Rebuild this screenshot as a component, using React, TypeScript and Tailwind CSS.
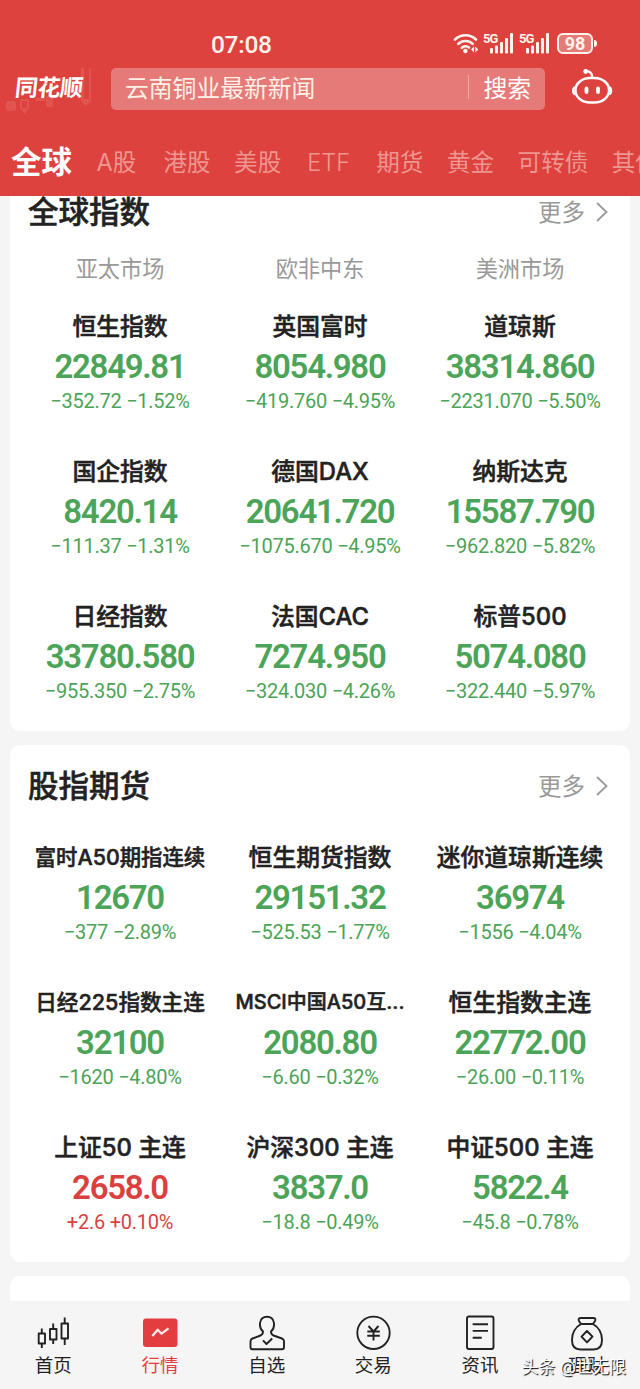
import type { ReactNode } from 'react';

type Quote = {
  name: string;
  value: string;
  change: string;
  percent: string;
  size?: string;
};

const TABS = ['港股', '美股', 'ETF', '期货', '黄金', '可转债', '其他'];

const MARKETS = ['亚太市场', '欧非中东', '美洲市场'];

const GLOBAL_QUOTES: Quote[] = [
  { name: '恒生指数', value: '22849.81', change: '−352.72', percent: '−1.52%' },
  { name: '英国富时', value: '8054.980', change: '−419.760', percent: '−4.95%' },
  { name: '道琼斯', value: '38314.860', change: '−2231.070', percent: '−5.50%' },
  { name: '国企指数', value: '8420.14', change: '−111.37', percent: '−1.31%' },
  { name: '德国DAX', value: '20641.720', change: '−1075.670', percent: '−4.95%' },
  { name: '纳斯达克', value: '15587.790', change: '−962.820', percent: '−5.82%' },
  { name: '日经指数', value: '33780.580', change: '−955.350', percent: '−2.75%' },
  { name: '法国CAC', value: '7274.950', change: '−324.030', percent: '−4.26%' },
  { name: '标普500', value: '5074.080', change: '−322.440', percent: '−5.97%' },
];

const FUTURES_QUOTES: Quote[] = [
  { name: '富时A50期指连续', value: '12670', change: '−377', percent: '−2.89%', size: 'text-[21.4px]' },
  { name: '恒生期货指数', value: '29151.32', change: '−525.53', percent: '−1.77%' },
  { name: '迷你道琼斯连续', value: '36974', change: '−1556', percent: '−4.04%' },
  { name: '日经225指数主连', value: '32100', change: '−1620', percent: '−4.80%', size: 'text-[21.6px]' },
  { name: 'MSCI中国A50互...', value: '2080.80', change: '−6.60', percent: '−0.32%', size: 'text-[20px]' },
  { name: '恒生指数主连', value: '22772.00', change: '−26.00', percent: '−0.11%' },
  { name: '上证50 主连', value: '2658.0', change: '+2.6', percent: '+0.10%' },
  { name: '沪深300 主连', value: '3837.0', change: '−18.8', percent: '−0.49%' },
  { name: '中证500 主连', value: '5822.4', change: '−45.8', percent: '−0.78%' },
];

function Signal() {
  return (
    <span className="flex w-[31px] items-start">
      <span className="-mr-[8px] w-[15px] font-[Roboto] text-[13px] leading-[11px] font-bold tracking-[-0.9px]">5G</span>
      <svg width="24" height="21" viewBox="0 0 24 21" fill="currentColor">
        <rect x="0" y="15" width="3" height="5.5" rx="1" />
        <rect x="5" y="12.5" width="3" height="8" rx="1" />
        <rect x="10" y="9" width="3" height="11.5" rx="1" />
        <rect x="15" y="5" width="3" height="15.5" rx="1" />
        <rect x="20" y="0" width="3" height="20.5" rx="1" />
      </svg>
    </span>
  );
}

function StatusBar() {
  return (
    <div className="flex h-[68px] items-start justify-between pt-8 pr-[43px] pl-[211px] text-[#fff3ec]">
      <span className="pt-px font-[Roboto] text-[24.5px] leading-6 font-medium tracking-[-0.3px]">07:08</span>
      <div className="flex items-start pt-px">
        <svg className="mr-[3px]" width="27" height="22" viewBox="0 0 27 22" fill="none" stroke="currentColor" strokeWidth="2.6" strokeLinecap="round">
          <path d="M2 6.5a15 15 0 0 1 21 0M5.4 10.8a10.3 10.3 0 0 1 14.2 0M8.8 14.8a5.4 5.4 0 0 1 7.2-.3" />
          <circle cx="12.4" cy="18" r="2.2" fill="currentColor" stroke="none" />
          <path d="M18 16.5 21 13.5v6zM22.300 13.5v6l3-3z" fill="currentColor" stroke="none" />
        </svg>
        <Signal />
        <span className="w-[5px]" />
        <Signal />
        <span className="ml-[7px] flex h-[21px] w-[36px] items-center justify-center rounded-[6px] border-2 border-current bg-white/30 font-[Roboto] text-[18px] leading-none font-bold">98</span>
        <span className="mt-[7px] ml-px h-[7px] w-[3px] rounded-r bg-current" />
      </div>
    </div>
  );
}

function Robot() {
  return (
    <svg className="ml-[26px]" width="42" height="40" viewBox="0 0 42 40" fill="none" stroke="white" strokeWidth="2.4" strokeLinecap="round">
      <rect x="4.5" y="10" width="33.5" height="24.5" rx="14.5" ry="12" />
      <path d="M3.3 19.5c-1.5 1.5-1.5 5 0 6.5M39 19.5c1.5 1.5 1.5 5 0 6.5" />
      <path d="M15 3.5c4-.5 6 1.2 6.3 6" />
      <circle cx="14.7" cy="3.5" r="2.4" fill="white" stroke="none" />
      <path d="M15.5 20.5v3.5M27 20.5v3.5" strokeWidth="3.8" />
    </svg>
  );
}

function SearchBar() {
  return (
    <div className="flex h-[44px] items-start">
      <div className="relative h-[42px] w-[111px] shrink-0">
        <svg className="absolute top-0 left-1" width="92" height="46" viewBox="0 0 92 46" fill="#e1544f">
          <rect x="2" y="33" width="10" height="10" rx="2" />
          <rect x="17" y="32" width="7" height="9" rx="1" fill="none" stroke="#e1544f" strokeWidth="2" />
          <path d="M18 42h5l-2.5 4zM32 30h9v3h-9zM42 28h7v11h-7zM77 0h3v31h5V0h2v33l-5 5-5-5z" />
        </svg>
        <span className="relative mt-[8px] ml-[15px] inline-block -skew-x-6 text-[23px] leading-[24px] font-bold tracking-[-0.5px] text-white">同花顺</span>
      </div>
      <div className="flex h-[42px] w-[434px] items-center rounded-[5px] bg-[#e57a78] pr-[14px] pl-[14px] text-[23.8px] leading-[40px] text-[#fff0e6]">
        <span className="flex-1">云南铜业最新新闻</span>
        <span className="mr-[14px] mb-1 h-6 w-px bg-[#f3aaa5]" />
        <span className="text-white">搜索</span>
      </div>
      <Robot />
    </div>
  );
}

function Section({ title, children }: { title: string; children: ReactNode }) {
  return (
    <section className="mx-[10px] rounded-[10px] bg-white px-[10px] pt-[11px] pb-[29px]">
      <div className="flex h-[60px] items-center justify-between pr-3 pl-2">
        <h2 className="text-[30.5px] leading-[60px] font-medium text-[#222] [-webkit-text-stroke:0.5px_#222]">{title}</h2>
        <span className="flex items-center gap-[11px] text-[23.5px] text-[#999]">
          <span className="pt-0.5 leading-[58px]">更多</span>
          <svg width="12" height="20" viewBox="0 0 12 20" fill="none" stroke="currentColor" strokeWidth="1.8">
            <path d="m1 1 9.5 9L1 19" />
          </svg>
        </span>
      </div>
      {children}
    </section>
  );
}

function QuoteGrid({ quotes }: { quotes: Quote[] }) {
  return (
    <div className="grid grid-cols-3 gap-y-[41px] text-center whitespace-nowrap">
      {quotes.map((quote) => (
        <div key={quote.name} className={quote.change.startsWith('+') ? 'text-[#d9413f]' : 'text-[#4ba457]'}>
          <p className={`h-9 font-medium text-[#222] [-webkit-text-stroke:0.5px_#222] ${quote.size ?? 'pt-px text-[23.8px]'} leading-9`}>{quote.name}</p>
          <p className="font-[Roboto] text-[33px] leading-[46px] font-semibold tracking-[-1.3px]">{quote.value}</p>
          <p className="font-[Roboto] text-[20px] leading-[22px] tracking-[-0.25px]">
            {quote.change} {quote.percent}
          </p>
        </div>
      ))}
    </div>
  );
}

function NavItem({ label, active, children }: { label: string; active?: boolean; children: ReactNode }) {
  return (
    <div className={`flex flex-1 flex-col items-center ${active ? 'text-[#e43d40]' : 'text-[#222]'}`}>
      <svg width="38" height="38" viewBox="0 0 38 38" fill="none" stroke="currentColor" strokeWidth="1.9" strokeLinejoin="round">
        {children}
      </svg>
      <span className="pt-px text-[18.5px] leading-[24px]">{label}</span>
    </div>
  );
}

function BottomNav() {
  return (
    <nav className="relative flex h-[88px] bg-[#f5f5f5] pt-[13px]">
      <NavItem label="首页">
        <path d="M4.7 19.5h6.3v10H4.7zM7.8 14.5v5M7.8 29.5v4.5M16 15h6.5v10.5H16zM19.2 9.5V15M19.2 25.5V30M27.5 9.5h6.5v15h-6.5zM30.7 3.5v6M30.7 24.5V31" />
      </NavItem>
      <NavItem label="行情" active>
        <rect x="2" y="4.5" width="34.5" height="28.5" rx="3" fill="currentColor" stroke="none" />
        <path d="m11.3 22 5.4-6.3 3.8 4 7-5.4" stroke="#fff0ee" strokeWidth="2.2" />
      </NavItem>
      <NavItem label="自选">
        <path d="M15 17.5c-4.5-4-4.5-14.7 4-14.7s8.5 10.7 4 14.7q0 3 2.5 4l8.5 3q2 .8 2 2.8V33q0 2.3-2 2.3H4.5q-2 0-2-2.3v-5.7q0-2 2-2.8l8-3q2.5-1 2.5-4z" />
        <path d="m15 26.3 3.500 3.7 5.7-5.5" />
      </NavItem>
      <NavItem label="交易">
        <circle cx="19.5" cy="18.8" r="16.2" />
        <path d="m14.5 12 5 5.5 5-5.5M13.3 17.5h12.5M13.3 21.8h12.5M19.5 17.5v9" />
      </NavItem>
      <NavItem label="资讯">
        <rect x="6" y="2.5" width="26.5" height="32.5" rx="2" />
        <path d="M11.7 10.2H27M11.7 16.9H27M11.7 23.7h9" />
      </NavItem>
      <NavItem label="理财">
        <path d="m13 10-2-3q-1.5-3 2-3h12q3.5 0 2 3l-2 3M13 10h12c6 3.5 9 9.5 9 16 0 6-3 9.5-8.5 9.5h-13C7 35.5 4 32 4 26c0-6.500 3-12.5 9-16zM19 17l5.5 5.7-5.5 5.7-5.5-5.7z" />
      </NavItem>
      <span className="absolute right-[14px] bottom-[10px] text-[16.7px] leading-[24px] whitespace-nowrap text-white [text-shadow:1px_1px_1px_#000]">头条 @世无限</span>
    </nav>
  );
}

export default function App() {
  return (
    <div className="flex h-[1389px] w-[640px] flex-col overflow-hidden bg-[#f5f5f5] font-['Inter','Noto_Sans_CJK_SC',sans-serif]">
      <header className="h-[196px] shrink-0 overflow-hidden bg-[#dd423e]">
        <StatusBar />
        <SearchBar />
        <div className="flex h-[84px] items-center gap-[23.5px] pt-[18px] pl-[11px] text-[23.6px] whitespace-nowrap text-[#ee9690]">
          <span className="pb-0.5 text-[30.5px] font-bold text-white">全球</span>
          <span className="pr-[3.5px] pl-px">A股</span>
          {TABS.map((tab) => (
            <span key={tab} className={tab === 'ETF' ? 'px-[2.5px] font-light' : ''}>
              {tab}
            </span>
          ))}
        </div>
      </header>
      <main className="flex min-h-0 flex-1 flex-col gap-[14px] overflow-hidden *:shrink-0">
        <div className="-mt-[25px]">
          <Section title="全球指数">
            <div className="mb-[13px] grid grid-cols-3 pt-px text-center text-[22.2px] leading-[52px] text-[#999]">
              {MARKETS.map((market) => (
                <span key={market}>{market}</span>
              ))}
            </div>
            <QuoteGrid quotes={GLOBAL_QUOTES} />
          </Section>
        </div>
        <Section title="股指期货">
          <div className="h-[23px]" />
          <QuoteGrid quotes={FUTURES_QUOTES} />
        </Section>
        <div className="mx-[10px] h-10 rounded-t-[10px] bg-white" />
      </main>
      <BottomNav />
    </div>
  );
}
